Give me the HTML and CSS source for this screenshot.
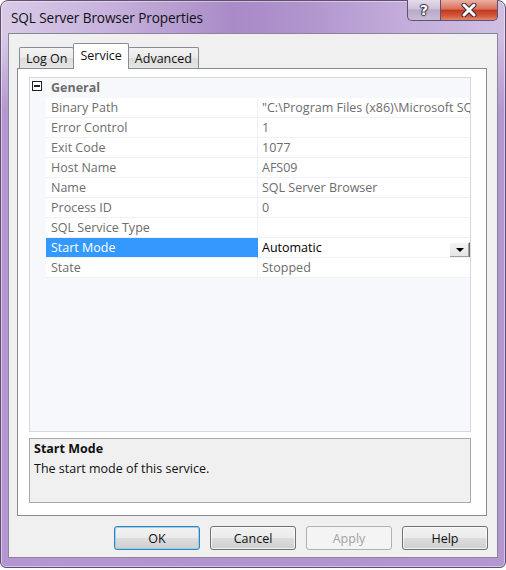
FILE: index.html
```html
<!DOCTYPE html>
<html>
<head>
<meta charset="utf-8">
<title>SQL Server Browser Properties</title>
<link rel="stylesheet" href="styles.css">
</head>
<body>
<div class="window">
  <div class="titlebar">
    <span class="title">SQL Server Browser Properties</span>
    <div class="caption-buttons">
      <div class="cap cap-help"><span>?</span></div>
      <div class="cap cap-close">
        <svg width="16" height="14" viewBox="0 0 16 14">
          <path d="M3 2 L13 12 M13 2 L3 12" stroke="#3a2a3a" stroke-width="5" stroke-linecap="round"/>
          <path d="M3 2 L13 12 M13 2 L3 12" stroke="#ffffff" stroke-width="3" stroke-linecap="round"/>
        </svg>
      </div>
    </div>
  </div>

  <div class="client">
    <div class="tabs">
      <div class="tab">Log On</div>
      <div class="tab active">Service</div>
      <div class="tab">Advanced</div>
    </div>

    <div class="tabpage">
      <div class="grid">
        <div class="row category">
          <span class="margin"><span class="expander"></span></span>
          <span class="cat-label">General</span>
        </div>
        <div class="row"><span class="margin"></span><span class="label">Binary Path</span><span class="value">"C:\Program Files (x86)\Microsoft SQL Server\90\Shared\sqlbrowser.exe"</span></div>
        <div class="row"><span class="margin"></span><span class="label">Error Control</span><span class="value">1</span></div>
        <div class="row"><span class="margin"></span><span class="label">Exit Code</span><span class="value">1077</span></div>
        <div class="row"><span class="margin"></span><span class="label">Host Name</span><span class="value">AFS09</span></div>
        <div class="row"><span class="margin"></span><span class="label">Name</span><span class="value">SQL Server Browser</span></div>
        <div class="row"><span class="margin"></span><span class="label">Process ID</span><span class="value">0</span></div>
        <div class="row"><span class="margin"></span><span class="label">SQL Service Type</span><span class="value"></span></div>
        <div class="row selected">
          <span class="margin"></span>
          <span class="label">Start Mode</span>
          <span class="value editable">Automatic
            <span class="dropdown">
              <svg width="8" height="4" viewBox="0 0 8 4"><path d="M0 0 H8 L4 4 Z" fill="#000"/></svg>
            </span>
          </span>
        </div>
        <div class="row"><span class="margin"></span><span class="label">State</span><span class="value">Stopped</span></div>
        <div class="grid-fill"><span class="margin"></span></div>
      </div>

      <div class="desc">
        <div class="desc-title">Start Mode</div>
        <div class="desc-text">The start mode of this service.</div>
      </div>
    </div>

    <div class="buttons">
      <button class="btn default">OK</button>
      <button class="btn">Cancel</button>
      <button class="btn" disabled>Apply</button>
      <button class="btn">Help</button>
    </div>
  </div>
</div>
</body>
</html>
```

FILE: styles.css
```css
* { box-sizing: border-box; }

body {
  margin: 0;
  background: #ffffff;
  font-family: "Open Sans", "Noto Sans", sans-serif;
}

/* Aero-style window frame */
.window {
  width: 506px;
  height: 568px;
  border: 1px solid #5e506e;
  border-radius: 8px 8px 6px 6px;
  padding: 0 7px 9px 7px;
  display: flex;
  flex-direction: column;
  background:
    linear-gradient(to bottom, rgba(180,150,210,0) 0, rgba(180,150,210,0) 36px, rgba(178,148,208,0.95) 110px),
    linear-gradient(to right, #d9cbe7 0%, #c6b1dc 22%, #a98bc7 46%, #b094cd 60%, #c3addb 80%, #d0bfe3 100%);
  box-shadow: inset 0 0 0 1px rgba(255,255,255,0.45);
}

.titlebar {
  height: 33px;
  display: flex;
  align-items: flex-start;
}

.title {
  font-size: 13.6px;
  color: #111;
  margin: 7px 0 0 3px;
  letter-spacing: -0.1px;
}

.caption-buttons {
  margin-left: auto;
  display: flex;
  margin-top: -1px;
}

.cap {
  height: 21px;
  display: flex;
  align-items: center;
  justify-content: center;
  border: 1px solid #5f526e;
  border-top: none;
}

.cap-help {
  width: 33px;
  border-radius: 0 0 0 5px;
  border-right: none;
  background: linear-gradient(to bottom, #e4dcea 0%, #cfc3da 45%, #b7a9c5 50%, #c9bdd6 100%);
}

.cap-help span {
  font-family: "DejaVu Sans", sans-serif;
  font-weight: bold;
  font-size: 14px;
  color: #fff;
  text-shadow: 0 0 1px #3b3046, 1px 0 1px #3b3046, -1px 0 1px #3b3046, 0 1px 1px #3b3046, 0 -1px 1px #3b3046;
}

.cap-close {
  width: 58px;
  border-radius: 0 0 5px 0;
  background: linear-gradient(to bottom, #eab0a2 0%, #d8705c 45%, #c3391f 52%, #d35a3f 80%, #e2876c 100%);
}

/* client area of the dialog */
.client {
  flex: 1;
  background: #f0f0f0;
  border: 1px solid #8c8596;
  padding: 9px 10px 7px 8px;
  display: flex;
  flex-direction: column;
}

.tabs {
  height: 25px;
  display: flex;
  align-items: flex-end;
  padding-left: 2px;
  position: relative;
  z-index: 1;
}

.tab {
  height: 21px;
  border: 1px solid #898c95;
  border-bottom: none;
  border-radius: 2px 2px 0 0;
  background: linear-gradient(to bottom, #f3f3f3 0%, #ebebeb 50%, #dddddd 51%, #e5e5e5 100%);
  font-size: 12.5px;
  color: #111;
  padding: 1px 6px 0 6px;
  line-height: 19px;
  margin-right: -1px;
}

.tab.active {
  height: 26px;
  margin-bottom: -1px;
  background: #ffffff;
  padding-top: 0;
  line-height: 23px;
  margin-left: 0;
  position: relative;
  z-index: 2;
}

.tabpage {
  height: 448px;
  border: 1px solid #898c95;
  background: #ffffff;
  padding: 8px 15px 12px 11px;
  display: flex;
  flex-direction: column;
}

/* property grid */
.grid {
  height: 355px;
  border: 1px solid #d4d9e0;
  background: #f6f8fb;
  display: flex;
  flex-direction: column;
  font-size: 12.5px;
  color: #6d6d6d;
}

.row {
  height: 20px;
  display: grid;
  grid-template-columns: 16px 212px 1fr;
  flex: none;
}

.row > span {
  white-space: nowrap;
  overflow: hidden;
  line-height: 19px;
}

.margin {
  background: #f6f8fb;
}

.label {
  background: #ffffff;
  border-bottom: 1px solid #eef1f5;
  border-right: 1px solid #eef1f5;
  padding-left: 5px;
}

.value {
  background: #ffffff;
  border-bottom: 1px solid #eef1f5;
  padding-left: 4px;
}

.row.category {
  grid-template-columns: 16px 1fr;
  background: #f6f8fb;
}

.row.category .margin {
  display: flex;
  align-items: flex-start;
  padding: 3px 0 0 2px;
}

.expander {
  width: 10px;
  height: 10px;
  border: 1px solid #222;
  background: #fff;
  position: relative;
}

.expander::after {
  content: "";
  position: absolute;
  left: 1px;
  right: 1px;
  top: 3px;
  height: 2px;
  background: #222;
}

.cat-label {
  font-weight: bold;
  padding-left: 5px;
}

.row.selected .label {
  background: #3399ff;
  color: #ffffff;
  border-right-color: #3399ff;
}

.value.editable {
  color: #000;
  display: flex;
  align-items: flex-start;
  position: relative;
}

.dropdown {
  position: absolute;
  right: 0;
  top: 4px;
  width: 21px;
  height: 16px;
  background: linear-gradient(to bottom, #f4f4f4, #e4e4e4);
  border-top: 1px solid #ffffff;
  border-left: 1px solid #ffffff;
  border-right: 1px solid #6a6a6a;
  border-bottom: 1px solid #6a6a6a;
  box-shadow: inset -1px -1px 0 #a0a0a0;
  display: flex;
  align-items: center;
  justify-content: center;
}

.grid-fill {
  flex: 1;
  display: grid;
  grid-template-columns: 16px 1fr;
}

/* description panel */
.desc {
  margin-top: 6px;
  height: 65px;
  border: 1px solid #a9a9a9;
  background: #f0f0f0;
  padding: 0 4px;
  font-size: 12.5px;
  color: #111;
  line-height: 20px;
}

.desc-title {
  font-weight: bold;
}

/* dialog buttons */
.buttons {
  margin-top: 10px;
  display: flex;
  justify-content: flex-end;
  gap: 10px;
  margin-right: -1px;
}

.btn {
  width: 86px;
  height: 24px;
  border: 1px solid #707070;
  border-radius: 3px;
  background: linear-gradient(to bottom, #f2f2f2 0%, #ebebeb 50%, #dddddd 51%, #cfcfcf 100%);
  box-shadow: inset 0 0 0 1px rgba(255,255,255,0.7);
  font-family: "Open Sans", "Noto Sans", sans-serif;
  font-size: 12.5px;
  color: #111;
  padding: 0;
}

.btn.default {
  border-color: #3c7fb1;
  box-shadow: inset 0 0 0 1px #8ed2f5;
}

.btn:disabled {
  border-color: #adb2b5;
  background: #f4f4f4;
  color: #a3a3a3;
  box-shadow: none;
}
```
